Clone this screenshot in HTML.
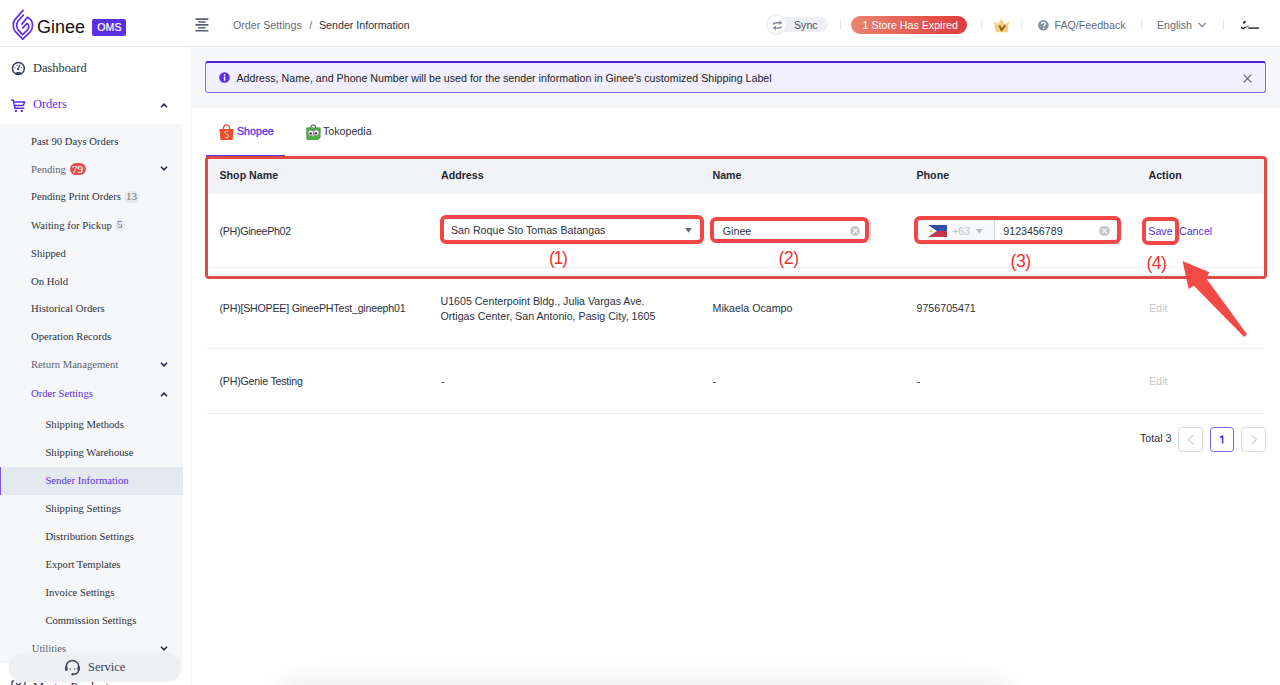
<!DOCTYPE html>
<html><head><meta charset="utf-8">
<style>
*{margin:0;padding:0;box-sizing:border-box}
html,body{width:1280px;height:685px;overflow:hidden;background:#fff}
body{position:relative;font-family:"Liberation Sans",sans-serif;font-size:10.67px;color:#2b3140}
.a{position:absolute}
.t{position:absolute;white-space:nowrap;line-height:12px}
.s{font-family:"Liberation Serif",serif}
.vd{position:absolute;width:1px;height:10px;top:20px;background:#e3e6eb}
.si{position:absolute;left:31px;white-space:nowrap;line-height:12px;font-family:"Liberation Serif",serif;font-size:10.67px;color:#2c3241}
.si3{left:45.4px}
.gr{color:#5a6274}
.chev{position:absolute;left:160.4px;width:8px;height:5px}
.th{position:absolute;top:169px;font-weight:bold;line-height:12px;white-space:nowrap;color:#23272f}
.rb{position:absolute;border:4px solid #f34646;border-radius:6px}
.lab{position:absolute;color:#f23333;font-size:17.6px;line-height:20px;letter-spacing:-0.5px;white-space:nowrap}
.clr{position:absolute;width:10.5px;height:10.5px;border-radius:50%;background:#c5c7cc}
.clr:before,.clr:after{content:"";position:absolute;left:5px;top:2.5px;width:1px;height:5.5px;background:#fff;transform:rotate(45deg)}
.clr:after{transform:rotate(-45deg)}
.rl{position:absolute;left:206px;width:1059px;height:1px;background:#eeeff1}
</style></head><body>

<!-- HEADER -->
<div class="a" style="left:0;top:0;width:1280px;height:47px;background:#fff;border-bottom:1px solid #e8ebee"></div>
<svg class="a" style="left:8px;top:6px" width="30" height="38" viewBox="0 0 30 38">
  <path d="M15.5 3.9 L6.9 13.6 C4.6 16.2 4.6 22.8 7.4 25.6 L14.7 33.2 L22.2 25.8 C25.3 22.8 25.3 15.6 22.1 13.1 L19.4 11.3 L13.4 18.6" fill="none" stroke="#5b2ee8" stroke-width="1.7" stroke-linejoin="round"/>
  <path d="M15.8 8.6 L10.3 14.7 C8.1 17.3 8.1 21.8 10.4 24.2 L14.7 28.6 L19.1 24.3 C21.3 22 21.3 18.7 19.2 17.4 L14 22.3" fill="none" stroke="#5b2ee8" stroke-width="1.7" stroke-linejoin="round"/>
</svg>
<div class="t" style="left:37px;top:16px;font-size:18px;line-height:22px;color:#111">Ginee</div>
<div class="a" style="left:92.4px;top:19px;width:34px;height:17px;background:#5b2ee8;border-radius:2px;color:#fff;font-size:10.6px;line-height:17.6px;text-align:center;-webkit-text-stroke:0.2px #fff">OMS</div>

<svg class="a" style="left:190px;top:14px" width="24" height="22" viewBox="0 0 24 22">
  <rect x="5.3" y="4.3" width="13.3" height="1.6" rx="0.8" fill="#596173"/>
  <rect x="8" y="7.2" width="7.9" height="1.6" rx="0.8" fill="#596173"/>
  <rect x="5.3" y="10.1" width="13.3" height="1.6" rx="0.8" fill="#596173"/>
  <rect x="8" y="13" width="7.9" height="1.6" rx="0.8" fill="#596173"/>
  <rect x="5.3" y="15.9" width="13.3" height="1.6" rx="0.8" fill="#596173"/>
</svg>
<div class="t" style="left:233px;top:19.3px;color:#5f6b7c">Order Settings</div>
<div class="t" style="left:309.3px;top:19.3px;color:#5f6b7c">/</div>
<div class="t" style="left:319px;top:19.3px;color:#2b3140">Sender Information</div>

<div class="a" style="left:770px;top:17.3px;width:58px;height:15px;background:#eef0f4;border-radius:8px"></div>
<div class="a" style="left:766px;top:14px;width:20.6px;height:20.6px;border-radius:50%;background:#fff;border:2.6px solid #eef0f4"></div>
<svg class="a" style="left:772px;top:19.5px" width="11" height="11" viewBox="0 0 11 11">
  <path d="M1.2 4.6 C1.8 2.9 3.3 2.6 5 2.7 L8.2 2.9" fill="none" stroke="#7a8499" stroke-width="1.4"/>
  <path d="M7.2 0.6 L10.2 3 L7.2 5 Z" fill="#7a8499"/>
  <path d="M9.6 6.2 C9 7.9 7.6 8.2 5.9 8.1 L2.8 7.9" fill="none" stroke="#7a8499" stroke-width="1.4"/>
  <path d="M3.8 5.8 L0.8 7.8 L3.8 10.2 Z" fill="#7a8499"/>
</svg>
<div class="t" style="left:794px;top:19.3px;color:#4d5566">Sync</div>
<div class="vd" style="left:840px"></div>
<div class="a" style="left:851.4px;top:16.2px;width:115.7px;height:17.6px;border-radius:9px;background:linear-gradient(90deg,#ea8572,#e03a3c)"></div>
<div class="t" style="left:862.5px;top:19.3px;color:#fff">1 Store Has Expired</div>
<div class="vd" style="left:981px"></div>
<svg class="a" style="left:993px;top:18px" width="17" height="15" viewBox="0 0 17 15">
  <path d="M1 3.5 L5 6.5 L8.5 0.8 L12 6.5 L16 3.5 L14.5 14.2 L2.5 14.2 Z" fill="#f6cd7c"/>
  <path d="M6.3 7.4 L8.6 12.3 L12.1 7.4" fill="none" stroke="#8d5e22" stroke-width="1.9" stroke-linejoin="round"/>
</svg>
<div class="vd" style="left:1021px"></div>
<svg class="a" style="left:1038.3px;top:19.9px" width="11" height="11" viewBox="0 0 11 11"><circle cx="5.35" cy="5.3" r="5.3" fill="#8591a5"/><path d="M3.5 4.1 C3.5 2.9 4.3 2.3 5.4 2.3 C6.5 2.3 7.3 3 7.3 3.9 C7.3 5.1 5.7 5.2 5.7 6.6" fill="none" stroke="#fff" stroke-width="1.35"/><rect x="4.95" y="7.5" width="1.5" height="1.5" fill="#fff"/></svg>
<div class="t" style="left:1054.5px;top:19.3px;color:#5f6b7c">FAQ/Feedback</div>
<div class="vd" style="left:1140.5px"></div>
<div class="t" style="left:1157px;top:19.3px;color:#5f6b7c">English</div>
<svg class="a" style="left:1198px;top:22px" width="9" height="6" viewBox="0 0 9 6"><path d="M0.6 0.8 L4.1 4.6 L7.6 0.8" fill="none" stroke="#6f7a8e" stroke-width="1.2"/></svg>
<div class="vd" style="left:1222.5px"></div>
<svg class="a" style="left:1240px;top:20px" width="20" height="11" viewBox="0 0 20 11">
  <ellipse cx="4.4" cy="2.3" rx="1.7" ry="1.0" transform="rotate(-35 4.4 2.3)" fill="#111"/>
  <path d="M1.3 6 C0.6 8.2 1.4 9.6 3.6 8.9 L10.3 5.2 L3.6 7.4 C2.3 7.8 1.6 7.3 1.3 6 Z" fill="#111"/>
  <rect x="8.3" y="7.2" width="10.7" height="1.8" fill="#555"/>
</svg>

<!-- SIDEBAR -->
<div class="a" style="left:0;top:47px;width:192px;height:638px;background:#fff;border-right:1px solid #f0f0f3"></div>
<svg class="a" style="left:11px;top:61px" width="15" height="15" viewBox="0 0 15 15">
  <circle cx="7.4" cy="7.5" r="5.95" fill="none" stroke="#38405a" stroke-width="1.5"/>
  <ellipse cx="7.4" cy="12.1" rx="3.1" ry="1.2" fill="#38405a"/>
  <path d="M7.2 8 L8.7 4.1" stroke="#38405a" stroke-width="1.2" stroke-linecap="round"/>
  <circle cx="7.2" cy="8.1" r="1.05" fill="#38405a"/>
  <circle cx="4" cy="6.6" r="0.6" fill="#38405a"/><circle cx="6" cy="4.5" r="0.6" fill="#38405a"/><circle cx="10.6" cy="6.6" r="0.6" fill="#38405a"/>
</svg>
<div class="t s" style="left:33px;top:61px;font-size:12.4px;line-height:14px;color:#2c3241">Dashboard</div>
<svg class="a" style="left:11px;top:99px" width="15" height="14" viewBox="0 0 15 14">
  <path d="M0.6 1.1 L2.4 1.2 L3.9 9.3 L12.7 9.3" fill="none" stroke="#5b2ee8" stroke-width="1.5" stroke-linecap="round" stroke-linejoin="round"/>
  <path d="M3.2 2.9 L13.6 2.9 L12.3 6.6 L3.9 6.6" fill="none" stroke="#5b2ee8" stroke-width="1.5" stroke-linejoin="round"/>
  <circle cx="4.9" cy="11.9" r="1.2" fill="#5b2ee8"/><circle cx="10.8" cy="11.9" r="1.2" fill="#5b2ee8"/>
</svg>
<div class="t s" style="left:33px;top:97.2px;font-size:12.4px;line-height:14px;color:#5b2ee8">Orders</div>
<svg class="chev" style="top:103px" viewBox="0 0 8 5"><path d="M1 4.2 L4 1.2 L7 4.2" fill="none" stroke="#1f2a44" stroke-width="1.6"/></svg>

<div class="a" style="left:0;top:124.4px;width:183.2px;height:538.7px;background:#f6f7f9"></div>
<div class="si" style="top:135.0px">Past 90 Days Orders</div>
<div class="si gr" style="top:162.8px">Pending</div>
<div class="a" style="left:69.5px;top:163.2px;width:16px;height:12.3px;border-radius:6.2px;background:#e84c4c;color:#fff;font-family:'Liberation Serif',serif;font-size:11px;line-height:12.6px;text-align:center;-webkit-text-stroke:0.15px #fff">79</div>
<svg class="chev" style="top:166px" viewBox="0 0 8 5"><path d="M1 0.8 L4 3.8 L7 0.8" fill="none" stroke="#1f2a44" stroke-width="1.6"/></svg>
<div class="si" style="top:190.4px">Pending Print Orders</div>
<div class="a" style="left:124.2px;top:191.3px;width:14.8px;height:11.3px;border-radius:5.6px;background:#e6e9ef;color:#6e737d;font-family:'Liberation Serif',serif;font-size:11px;line-height:11.8px;text-align:center">13</div>
<div class="si" style="top:218.5px">Waiting for Pickup</div>
<div class="a" style="left:114.8px;top:219.4px;width:10px;height:11.3px;border-radius:5px;background:#e6e9ef;color:#6e737d;font-family:'Liberation Serif',serif;font-size:11px;line-height:11.8px;text-align:center">5</div>
<div class="si" style="top:246.8px">Shipped</div>
<div class="si" style="top:274.6px">On Hold</div>
<div class="si" style="top:302.4px">Historical Orders</div>
<div class="si" style="top:330.4px">Operation Records</div>
<div class="si gr" style="top:358.4px">Return Management</div>
<svg class="chev" style="top:362px" viewBox="0 0 8 5"><path d="M1 0.8 L4 3.8 L7 0.8" fill="none" stroke="#1f2a44" stroke-width="1.6"/></svg>
<div class="si" style="top:386.7px;color:#5b2ee8">Order Settings</div>
<svg class="chev" style="top:391.5px" viewBox="0 0 8 5"><path d="M1 4.2 L4 1.2 L7 4.2" fill="none" stroke="#1f2a44" stroke-width="1.6"/></svg>
<div class="si si3" style="top:418.4px">Shipping Methods</div>
<div class="si si3" style="top:446.4px">Shipping Warehouse</div>
<div class="a" style="left:0;top:466.9px;width:183.2px;height:28px;background:#e4e8ef;border-left:1.5px solid #7a55e8"></div>
<div class="si si3" style="top:474.0px;color:#5b2ee8">Sender Information</div>
<div class="si si3" style="top:502.2px">Shipping Settings</div>
<div class="si si3" style="top:530.1px">Distribution Settings</div>
<div class="si si3" style="top:558.4px">Export Templates</div>
<div class="si si3" style="top:586.0px">Invoice Settings</div>
<div class="si si3" style="top:614.2px">Commission Settings</div>
<div class="si gr" style="top:642.2px;left:31.7px">Utilities</div>
<svg class="chev" style="top:646px" viewBox="0 0 8 5"><path d="M1 0.8 L4 3.8 L7 0.8" fill="none" stroke="#1f2a44" stroke-width="1.6"/></svg>
<div class="t s" style="left:33px;top:680px;font-size:12.4px;line-height:14px;color:#2c3241">Master Products</div>
<svg class="a" style="left:11px;top:680px" width="15" height="8" viewBox="0 0 15 8"><path d="M1 8 L1 2 C1 1.3 1.4 1 2 1 L3 1 M12 1 L13 1 C13.6 1 14 1.3 14 2 L14 8" fill="none" stroke="#3a4256" stroke-width="1.3"/><path d="M5 3 L10 8 M10 3 L5 8" stroke="#3a4256" stroke-width="1.3"/></svg>
<div class="a" style="left:9.2px;top:653.3px;width:171.6px;height:29px;border-radius:14.5px;background:#eef0f4;box-shadow:0 0 3px rgba(0,0,0,0.04)"></div>
<svg class="a" style="left:64px;top:659px" width="17" height="17" viewBox="0 0 17 17">
  <path d="M2.3 9.5 L2.3 7.6 C2.3 4.2 5 1.6 8.5 1.6 C12 1.6 14.7 4.2 14.7 7.6 L14.7 9.5" fill="none" stroke="#3e465a" stroke-width="1.5"/>
  <rect x="1" y="7.3" width="2.6" height="4.6" rx="1.1" fill="#3e465a"/><rect x="13.4" y="7.3" width="2.6" height="4.6" rx="1.1" fill="#3e465a"/>
  <path d="M14.5 11.5 C14 14 12 15.3 9 15.3" fill="none" stroke="#3e465a" stroke-width="1.3"/>
  <circle cx="8.6" cy="15.3" r="1.2" fill="#3e465a"/>
  <circle cx="6.4" cy="10" r="0.75" fill="#3e465a"/><circle cx="10.6" cy="10" r="0.75" fill="#3e465a"/>
</svg>
<div class="t s" style="left:88px;top:660.3px;font-size:12.4px;line-height:14px;color:#3a4256">Service</div>

<!-- MAIN -->
<div class="a" style="left:192px;top:47px;width:1088px;height:60.8px;background:#f5f6f8"></div>
<div class="a" style="left:205.3px;top:60.6px;width:1060.5px;height:32.3px;background:#f1effd;border:1px solid #8466ea;border-top:2.5px solid #4a1fdc;border-radius:3px;box-shadow:0 0 0 0.8px #fff"></div>
<svg class="a" style="left:219.3px;top:72.2px" width="11" height="11" viewBox="0 0 11 11"><circle cx="5.5" cy="5.5" r="5.3" fill="#5a2ee6"/><rect x="4.8" y="2.3" width="1.5" height="1.4" fill="#fff"/><rect x="4.8" y="4.5" width="1.5" height="4.3" fill="#fff"/></svg>
<div class="t" style="left:236.5px;top:71.8px;color:#222">Address, Name, and Phone Number will be used for the sender information in Ginee's customized Shipping Label</div>
<svg class="a" style="left:1243px;top:73.5px" width="9" height="9" viewBox="0 0 9 9"><path d="M0.7 0.7 L8.3 8.3 M8.3 0.7 L0.7 8.3" stroke="#5a6070" stroke-width="1.1"/></svg>

<!-- card -->
<div class="a" style="left:192px;top:107.8px;width:1088px;height:578px;background:#fff"></div>
<svg class="a" style="left:219px;top:123.5px" width="15" height="17" viewBox="0 0 15 17">
  <path d="M4.4 5.2 C4.4 2.2 5.7 0.9 7.5 0.9 C9.3 0.9 10.6 2.2 10.6 5.2" fill="none" stroke="#ee4d2d" stroke-width="1.3"/>
  <path d="M0.4 4.9 L14.6 4.9 L13.6 15.2 C13.5 15.8 13.1 16.1 12.5 16.1 L2.5 16.1 C1.9 16.1 1.5 15.8 1.4 15.2 Z" fill="#ee4d2d"/>
  <path d="M9.2 7.6 C8.4 6.7 5.9 6.6 5.9 8.4 C5.9 10.4 9.6 9.9 9.6 12.3 C9.6 14.1 6.8 14.3 5.6 13.2" fill="none" stroke="#fde8e2" stroke-width="0.85"/>
</svg>
<div class="t" style="left:237px;top:125px;color:#5a2ee6;-webkit-text-stroke:0.3px #5a2ee6">Shopee</div>
<svg class="a" style="left:305.5px;top:123.5px" width="15" height="17" viewBox="0 0 15 17">
  <path d="M4.6 4.4 C4.6 2 5.8 1 7.2 1 C8.6 1 9.8 2 9.8 4.4" fill="none" stroke="#4a4a4a" stroke-width="1.1"/>
  <path d="M0.6 3.7 L14.3 3.7 L14.3 12.3 C14.3 14.3 13 15.7 11 15.7 L1.6 15.7 C1 15.7 0.6 15.3 0.6 14.7 Z" fill="#4fae4a" stroke="#3d8a3a" stroke-width="0.5"/>
  <circle cx="4.9" cy="8.9" r="2.9" fill="#fff" stroke="#555" stroke-width="0.6"/><circle cx="10.2" cy="8.7" r="2.9" fill="#fff" stroke="#555" stroke-width="0.6"/>
  <ellipse cx="4.6" cy="9.5" rx="1.5" ry="1.1" fill="#333"/><ellipse cx="9.8" cy="9.3" rx="1.5" ry="1.1" fill="#333"/>
  <circle cx="7.4" cy="11.6" r="0.9" fill="#f1d36a"/>
</svg>
<div class="t" style="left:323px;top:125px;color:#2b3140">Tokopedia</div>
<div class="a" style="left:205.5px;top:154.6px;width:79px;height:2px;background:#5a2ee6"></div>

<!-- table -->
<div class="a" style="left:206px;top:159px;width:1059px;height:34.6px;background:#f2f3f7"></div>
<div class="th" style="left:219.5px">Shop Name</div>
<div class="th" style="left:441px">Address</div>
<div class="th" style="left:712.5px">Name</div>
<div class="th" style="left:916.5px">Phone</div>
<div class="th" style="left:1148.5px">Action</div>
<div class="rl" style="top:267px"></div>
<div class="rl" style="top:347.6px"></div>
<div class="rl" style="top:412.5px"></div>

<div class="t" style="left:219.5px;top:224.6px;letter-spacing:-0.3px">(PH)GineePh02</div>
<!-- address select -->
<div class="a" style="left:444px;top:218.5px;width:257px;height:21.5px;background:#fff"></div>
<div class="t" style="left:451px;top:223.7px">San Roque Sto Tomas Batangas</div>
<svg class="a" style="left:685px;top:228px" width="7" height="5" viewBox="0 0 7 5"><path d="M0 0 L7 0 L3.5 4.8 Z" fill="#5f6b7c"/></svg>
<div class="rb" style="left:440.2px;top:214.8px;width:264.2px;height:29px"></div>
<div class="lab" style="left:549px;top:248px;letter-spacing:-1.3px">(1)</div>
<!-- name input -->
<div class="a" style="left:712px;top:219px;width:159px;height:24px;border:1px solid #d0d6e0;border-radius:3px;background:#fff"></div>
<div class="t" style="left:722.8px;top:224.8px">Ginee</div>
<div class="clr" style="left:849.8px;top:225.5px"></div>
<div class="rb" style="left:709.8px;top:217.4px;width:159.7px;height:25.6px"></div>
<div class="lab" style="left:778.5px;top:247.8px">(2)</div>
<!-- phone -->
<div class="a" style="left:917px;top:219.5px;width:201px;height:21.5px;background:#fff"></div>
<div class="a" style="left:917px;top:219.5px;width:77.5px;height:21.5px;background:#f7f8fa;border-right:1px solid #cdd4df"></div>
<svg class="a" style="left:928px;top:224.8px" width="19" height="12" viewBox="0 0 19 12">
  <rect x="0" y="0" width="19" height="6" fill="#2b4fa3"/><rect x="0" y="6" width="19" height="6" fill="#c0384a"/>
  <path d="M0 0 L9 6 L0 12 Z" fill="#fff"/><circle cx="3" cy="6" r="1.4" fill="#f5c342"/>
</svg>
<div class="t" style="left:952px;top:224.8px;color:#c0c4cc">+63</div>
<svg class="a" style="left:975.5px;top:228.5px" width="7" height="5" viewBox="0 0 7 5"><path d="M0 0 L7 0 L3.5 4.8 Z" fill="#b8bec9"/></svg>
<div class="t" style="left:1003.3px;top:224.8px">9123456789</div>
<div class="clr" style="left:1099px;top:225.5px"></div>
<div class="rb" style="left:913.6px;top:216.1px;width:207.9px;height:28.1px"></div>
<div class="lab" style="left:1010.6px;top:250.8px">(3)</div>
<!-- action -->
<div class="t" style="left:1148.3px;top:224.6px;color:#5a2ee6">Save</div>
<div class="t" style="left:1179px;top:224.6px;color:#5a2ee6">Cancel</div>
<div class="rb" style="left:1142px;top:217.2px;width:37.4px;height:27.8px"></div>
<div class="lab" style="left:1146.4px;top:252.6px">(4)</div>

<!-- big annotation box -->
<div class="a" style="left:205.4px;top:156.2px;width:1061.6px;height:122.7px;border:3.2px solid #e04b45;border-radius:4px"></div>
<svg class="a" style="left:0;top:0" width="1280" height="685" viewBox="0 0 1280 685">
  <path d="M1182.5 261.1 L1209.3 272.2 L1206.3 278.4 L1247 334.3 L1244.2 337.1 L1193.9 285.8 L1188.7 289.1 Z" fill="#f44a45"/>
</svg>

<!-- row 2 -->
<div class="t" style="left:219.5px;top:302.4px;letter-spacing:-0.23px">(PH)[SHOPEE] GineePHTest_gineeph01</div>
<div class="a" style="left:440.5px;top:294.4px;line-height:15.1px;white-space:nowrap">U1605 Centerpoint Bldg., Julia Vargas Ave.<br>Ortigas Center, San Antonio, Pasig City, 1605</div>
<div class="t" style="left:712.5px;top:302.4px">Mikaela Ocampo</div>
<div class="t" style="left:916.5px;top:302.4px">9756705471</div>
<div class="t" style="left:1149px;top:302.4px;color:#c6c6c9">Edit</div>
<!-- row 3 -->
<div class="t" style="left:219.5px;top:375px;letter-spacing:-0.22px">(PH)Genie Testing</div>
<div class="t" style="left:441px;top:375px">-</div>
<div class="t" style="left:712.5px;top:375px">-</div>
<div class="t" style="left:916.5px;top:375px">-</div>
<div class="t" style="left:1149px;top:375px;color:#c6c6c9">Edit</div>

<!-- pagination -->
<div class="t" style="left:1140px;top:431.8px">Total 3</div>
<div class="a" style="left:1178px;top:427.2px;width:24.8px;height:24.6px;border:1px solid #d3d8e0;border-radius:3.5px"></div>
<svg class="a" style="left:1185px;top:433px" width="11" height="13" viewBox="0 0 11 13"><path d="M8.4 2.1 L2.8 6.6 L8.4 11" fill="none" stroke="#b9bdc6" stroke-width="1"/></svg>
<div class="a" style="left:1209.7px;top:427.2px;width:24.8px;height:24.6px;border:1px solid #8463ea;border-radius:3.5px"></div>
<svg class="a" style="left:1217px;top:434.7px" width="10" height="10" viewBox="0 0 10 10"><path d="M3.2 2.6 L5.6 1 L5.6 8.6" fill="none" stroke="#5a2ee6" stroke-width="1.6" stroke-linejoin="round"/></svg>
<div class="a" style="left:1241.2px;top:427.2px;width:24.8px;height:24.6px;border:1px solid #d3d8e0;border-radius:3.5px"></div>
<svg class="a" style="left:1248px;top:433px" width="11" height="13" viewBox="0 0 11 13"><path d="M3.1 2.1 L8.7 6.6 L3.1 11" fill="none" stroke="#b9bdc6" stroke-width="1"/></svg>

<!-- bottom shadow -->
<div class="a" style="left:285px;top:692px;width:720px;height:30px;border-radius:14px;background:#fff;box-shadow:0 0 30px 10px rgba(0,0,0,0.085)"></div>

</body></html>
